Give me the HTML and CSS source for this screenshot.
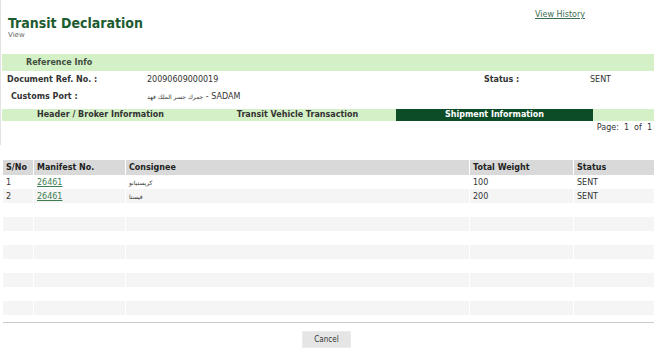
FILE: index.html
```html
<!DOCTYPE html>
<html>
<head>
    <meta charset="UTF-8">
    <title>Transit Declaration</title>
    <link rel="stylesheet" href="styles.css">
</head>
<body>
    <div class="top">
        <div class="head">
            <div class="title-block">
                <h1>Transit Declaration</h1>
                <div class="subtitle">View</div>
            </div>
            <a href="#" class="history-link">View History</a>
        </div>

        <div class="band">Reference Info</div>
        <div class="info">
            <div class="label">Document Ref. No. :</div>
            <div class="value">20090609000019</div>
            <div class="label">Status :</div>
            <div class="value">SENT</div>
            <div class="label indent">Customs Port :</div>
            <div class="value"><span class="ar">جمرك جسر الملك فهد</span> - SADAM</div>
            <div></div>
            <div></div>
        </div>

        <!-- tabs -->
        <div class="tabs">
            <div class="tab">Header / Broker Information</div>
            <div class="tab">Transit Vehicle Transaction</div>
            <div class="tab active">Shipment Information</div>
        </div>
        <div class="pager">Page:&nbsp; 1&nbsp; of&nbsp; 1</div>
    </div>

    <table class="grid">
        <thead>
            <tr>
                <th class="c-no">S/No</th>
                <th class="c-man">Manifest No.</th>
                <th class="c-con">Consignee</th>
                <th class="c-wt">Total Weight</th>
                <th class="c-st">Status</th>
            </tr>
        </thead>
        <tbody>
            <tr><td>1</td><td><a href="#">26461</a></td><td><span class="ar">كريستيانو</span></td><td>100</td><td>SENT</td></tr>
            <tr><td>2</td><td><a href="#">26461</a></td><td><span class="ar">فيستا</span></td><td>200</td><td>SENT</td></tr>
            <tr><td></td><td></td><td></td><td></td><td></td></tr>
            <tr><td></td><td></td><td></td><td></td><td></td></tr>
            <tr><td></td><td></td><td></td><td></td><td></td></tr>
            <tr><td></td><td></td><td></td><td></td><td></td></tr>
            <tr><td></td><td></td><td></td><td></td><td></td></tr>
            <tr><td></td><td></td><td></td><td></td><td></td></tr>
            <tr><td></td><td></td><td></td><td></td><td></td></tr>
            <tr><td></td><td></td><td></td><td></td><td></td></tr>
        </tbody>
    </table>

    <div class="footer">
        <button class="cancel">Cancel</button>
    </div>
</body>
</html>
```

FILE: styles.css
```css
body {
    margin: 0;
    padding: 0;
    background-color: #fff;
    color: #333;
    font-family: "DejaVu Sans", Verdana, sans-serif;
    font-size: 8px;
}

.top {
    border-left: 1px solid #e2e2e2;
    height: 145px;
    margin-bottom: 15px;
}

.head {
    display: flex;
    justify-content: space-between;
    height: 54px;
}

.title-block {
    padding: 15px 0 0 7px;
}

h1 {
    margin: 0;
    font-family: "DejaVu Sans Condensed", "DejaVu Sans", sans-serif;
    font-size: 14px;
    line-height: 16px;
    color: #1d5c31;
}

.subtitle {
    color: #666;
    font-size: 7px;
    line-height: 9px;
}

.history-link {
    margin: 10px 69px 0 0;
    color: #3e6d52;
    line-height: 10px;
    height: 10px;
}

.band {
    margin-left: 1px;
    background-color: #d4f0c6;
    height: 17px;
    line-height: 17px;
    padding-left: 24px;
    font-weight: bold;
    color: #404d40;
}

.info {
    display: grid;
    grid-template-columns: 146px 331px 112px 1fr;
    grid-auto-rows: 17px;
    align-items: center;
}

.info .label {
    padding-left: 6px;
    font-weight: bold;
    color: #333;
}

.info .label.indent {
    padding-left: 10px;
}

.ar {
    font-size: 6px;
}

.tabs {
    display: flex;
    margin: 4px 0 0 1px;
    background-color: #d4f0c6;
    height: 12px;
}

.tab {
    width: 197px;
    text-align: center;
    line-height: 12px;
    font-weight: bold;
    color: #333;
}

.tab.active {
    background-color: #0c4d27;
    color: #fff;
}

.pager {
    text-align: right;
    padding-right: 2px;
    line-height: 14px;
}

.grid {
    margin-left: 2px;
    width: 652px;
    border-collapse: collapse;
    table-layout: fixed;
}

.grid th, .grid td {
    border-left: 1px solid #fff;
    padding: 0 3px;
    text-align: left;
    white-space: nowrap;
    overflow: hidden;
}

.grid th {
    background-color: #d9d9d9;
    color: #222;
    height: 15px;
    font-weight: bold;
}

.grid td {
    height: 14px;
}

.grid tbody tr:nth-child(even) td {
    background-color: #f5f5f5;
}

.grid a {
    color: #3d7d52;
}

.c-no { width: 24px; }
.c-man { width: 85px; }
.c-con { width: 337px; }
.c-wt { width: 97px; }

.footer {
    margin: 7px 0 0 3px;
    border-top: 1px solid #cbcbcb;
    padding-top: 8px;
    text-align: center;
}

.cancel {
    background-color: #e5e5e5;
    border: 1px solid #ececec;
    color: #333;
    font-family: "DejaVu Sans Condensed", "DejaVu Sans", sans-serif;
    font-size: 8px;
    width: 49px;
    height: 17px;
    padding: 0;
    margin-left: -4px;
}
```
